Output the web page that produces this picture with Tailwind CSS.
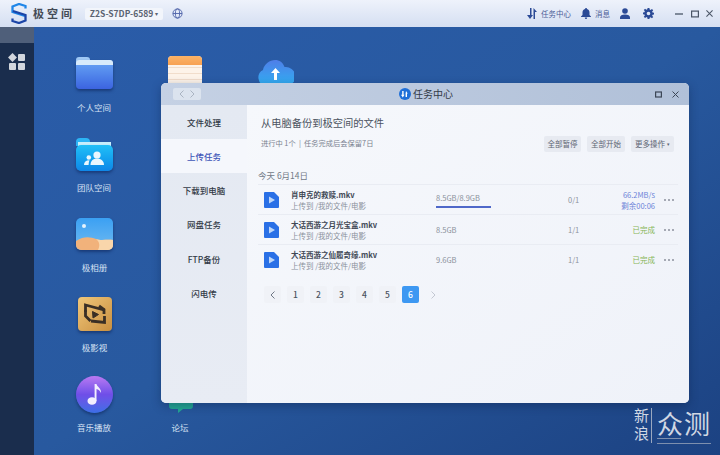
<!DOCTYPE html>
<html lang="zh-CN">
<head>
<meta charset="UTF-8">
<title>极空间 任务中心</title>
<script src="https://cdn.jsdelivr.net/npm/@tailwindcss/browser@4"></script>
</head>
<body class="w-[720px] h-[455px] overflow-hidden font-['Noto_Sans_CJK_SC','Liberation_Sans',sans-serif]">
<div class="relative w-[720px] h-[455px] flex flex-col overflow-hidden">
  <!-- Top bar -->
  <header class="h-[27px] shrink-0 flex items-center bg-gradient-to-b from-[#eef2fb] to-[#d5dff2] text-[#3c4c86]">
    <svg class="ml-[11px] w-[16px] h-[21px]" viewBox="0 0 16 21" fill="none" stroke-width="2.300"><path d="M14.500 5.500V3L8 1 1.500 3.500V9L14 13" stroke="#1f86e8"/><path d="M1.500 15.500V18L8 20l6.500-2.500V12L2 8" stroke="#1c45a8"/></svg>
    <span class="ml-[6px] w-[42px] text-[11px] leading-none font-bold tracking-[3px] text-[#434a56]">极空间</span>
    <div class="ml-[10px] w-[78px] h-[12px] rounded-[2px] bg-[#f2f5fb] flex items-center justify-center text-[8.500px] font-bold text-[#5b6472] whitespace-nowrap">Z2S-S7DP-6589<span class="ml-[2px] text-[6px] font-normal">▾</span></div>
    <svg class="ml-[9px] w-[11px] h-[11px]" viewBox="0 0 12 12" fill="none" stroke="#4e63a8" stroke-width="1"><circle cx="6" cy="6" r="5"/><ellipse cx="6" cy="6" rx="2.300" ry="5"/><path d="M1 6h10"/></svg>
    <div class="ml-auto flex items-center">
      <svg class="w-[10px] h-[11px]" viewBox="0 0 10 11" fill="#2b4a96"><path d="M3 0h1.500v7H6L3 11 0 7h3zM6.500 0 10 4H8v7H6.500z"/></svg>
      <span class="ml-[4px] text-[7.500px] leading-none text-[#4a5c96]">任务中心</span>
      <svg class="ml-[10px] w-[10px] h-[11px]" viewBox="0 0 10 11" fill="#2b4a96"><path d="M5 0c.6 0 1 .4 1 .9C7.600 1.300 8.500 2.600 8.500 4.500V7L10 8.500V9H0v-.5L1.500 7V4.500C1.500 2.600 2.400 1.300 4 .9 4 .4 4.400 0 5 0zM3.800 9.500h2.400C6.200 10.300 5.700 11 5 11s-1.200-.7-1.200-1.500z"/></svg>
      <span class="ml-[4px] text-[7.500px] leading-none text-[#4a5c96]">消息</span>
      <svg class="ml-[10px] w-[10px] h-[11px]" viewBox="0 0 10 11" fill="#2b4a96"><circle cx="5" cy="3" r="2.800"/><path d="M0 11V9.500C0 7.500 2 6.500 5 6.500s5 1 5 3V11z"/></svg>
      <svg class="ml-[13px] w-[11px] h-[11px]" viewBox="0 0 24 24" fill="#2b4a96"><path fill-rule="evenodd" d="M10 0h4l.6 3.500 2 .8L19.500 2l2.800 2.800-2.300 2.900.8 2 3.200.6v4l-3.200.6-.8 2 2.300 2.900-2.800 2.800-2.900-2.300-2 .8L14 24h-4l-.6-3.500-2-.8L4.500 22l-2.800-2.800L4 16.300l-.8-2L0 13.700v-4l3.200-.6.8-2-2.300-2.900L4.500 1.400l2.900 2.300 2-.8zM12 8a4 4 0 1 0 0 8 4 4 0 0 0 0-8z"/></svg>
      <svg class="ml-[21px] w-[8px] h-[8px]" viewBox="0 0 8 8" stroke="#4a5566" stroke-width="1.300"><path d="M0 4h8"/></svg>
      <svg class="ml-[8px] w-[8px] h-[8px]" viewBox="0 0 8 8" fill="none" stroke="#4a5566" stroke-width="1.200"><rect x=".6" y="1.100" width="6.800" height="5.800"/></svg>
      <svg class="ml-[7px] mr-[7px] w-[7px] h-[7px]" viewBox="0 0 8 8" stroke="#4a5566" stroke-width="1.200"><path d="m.5.500 7 7m0-7-7 7"/></svg>
    </div>
  </header>

  <div class="flex-1 flex">
    <!-- Left dock -->
    <aside class="w-[34px] shrink-0 bg-[#1a2d4d] flex flex-col items-center">
      <div class="w-full h-[16px] bg-[#4f5f7a]"></div>
      <div class="mt-[11px] grid grid-cols-2 gap-[1.500px]">
        <div class="w-[7px] h-[7px] rotate-45 scale-90 bg-[#d2d6dd]"></div>
        <div class="w-[7px] h-[7px] rounded-[1px] bg-[#d2d6dd]"></div>
        <div class="w-[7px] h-[7px] rounded-[1px] bg-[#d2d6dd]"></div>
        <div class="w-[7px] h-[7px] rounded-[1px] bg-[#d2d6dd]"></div>
      </div>
    </aside>
    <!-- Desktop -->
    <main class="flex-1 bg-gradient-to-br from-[#2a5ca9] via-[#28599f] to-[#1c4282]"></main>
  </div>

  <!-- Desktop icons -->
  <div class="absolute left-[76px] top-[57px] w-[37px] h-[32px]">
    <div class="absolute left-0 top-0 w-[14px] h-[6px] rounded-t-[3px] bg-[#9fc8f5]"></div>
    <div class="absolute left-0 top-[3px] w-full h-[29px] rounded-[4px] bg-gradient-to-b from-[#6aa6f5] to-[#3c63e0] shadow-[0_2px_3px_rgba(10,30,80,.5)]"></div>
    <div class="absolute left-0 top-[3px] w-full h-[5px] rounded-t-[3px] bg-[#d8ebfb]"></div>
  </div>
  <span class="absolute left-[74px] top-[101px] w-[40px] text-center text-[8.500px] leading-[12px] text-[#d7e2f4]">个人空间</span>

  <div class="absolute left-[76px] top-[138px] w-[37px] h-[33px]">
    <div class="absolute left-0 top-0 w-[14px] h-[8px] rounded-t-[4px] bg-[#2cb4f5]"></div>
    <div class="absolute left-[2px] top-[4px] w-[33px] h-[6px] bg-[#c7eefc]"></div>
    <div class="absolute left-0 top-[7px] w-full h-[26px] rounded-[5px] bg-gradient-to-b from-[#22c0f7] to-[#0f87e8] shadow-[0_2px_3px_rgba(10,30,80,.5)] flex items-center justify-center">
      <svg class="w-[21px] h-[14px]" viewBox="0 0 21 14" fill="#eaf7fe"><circle cx="13" cy="4" r="3.600"/><path d="M6.500 14c0-4 2.500-6.500 6.500-6.500s7 2.500 7 6.500z"/><circle cx="4.800" cy="6.500" r="2.300"/><path d="M0 14c0-3 1.800-4.800 5.500-4.800-.6 1.400-.9 3-.9 4.800z"/></svg>
    </div>
  </div>
  <span class="absolute left-[74px] top-[181px] w-[40px] text-center text-[8.500px] leading-[12px] text-[#d7e2f4]">团队空间</span>

  <div class="absolute left-[76px] top-[218px] w-[37px] h-[32px] rounded-[5px] overflow-hidden bg-gradient-to-b from-[#3aa0f3] to-[#6dbaf0] shadow-[0_2px_3px_rgba(10,30,80,.5)]">
    <div class="absolute left-[6px] top-[6px] w-[4px] h-[4px] rounded-full bg-[#e4f3fd]"></div>
    <svg class="absolute left-0 bottom-0 w-[37px] h-[16px]" viewBox="0 0 37 16" preserveAspectRatio="none"><path d="M0 7C8 2 14 3 20 5c6 2 11 0 17 1v10H0z" fill="#f1b27b"/><path d="M20 5c5 2 11 0 17 1v10H22c2-4 2-8-2-11z" fill="#f9d6ab"/></svg>
  </div>
  <span class="absolute left-[76px] top-[261px] w-[37px] text-center text-[8.500px] leading-[12px] text-[#d7e2f4]">极相册</span>

  <div class="absolute left-[78px] top-[297px] w-[34px] h-[34px] rounded-[4px] bg-gradient-to-br from-[#f0c77a] to-[#c98f3f] shadow-[0_2px_3px_rgba(10,30,80,.5)] flex items-center justify-center">
    <svg class="w-[24px] h-[25px]" viewBox="0 0 24 25" fill="none" stroke="#3a2f25" stroke-width="2.800"><path d="M2.500 10V3L21 8v4"/><path d="M2.500 8 2.500 14l5 5"/><path d="M21.500 14v6.500L8 19"/><path d="M21.500 8 16 4"/><path d="m9.500 9.500 6 3-5.500 3.500z" fill="#3a2f25" stroke-width="1"/></svg>
  </div>
  <span class="absolute left-[76px] top-[341px] w-[37px] text-center text-[8.500px] leading-[12px] text-[#d7e2f4]">极影视</span>

  <div class="absolute left-[76px] top-[376px] w-[37px] h-[37px] rounded-full bg-gradient-to-b from-[#bb79f2] via-[#6f4ee8] to-[#3a6ee6] shadow-[0_2px_3px_rgba(10,30,80,.5)] flex items-center justify-center">
    <svg class="w-[16px] h-[21px]" viewBox="0 0 16 21" fill="#f3effe"><ellipse cx="5" cy="17" rx="4.500" ry="3.800"/><path d="M7.600 0H9.500c.4 3 5 4 4.500 9-1-2.500-2.500-3.500-4.500-4V17H7.600z"/></svg>
  </div>
  <span class="absolute left-[74px] top-[421px] w-[40px] text-center text-[8.500px] leading-[12px] text-[#d7e2f4]">音乐播放</span>

  <div class="absolute left-[168px] top-[56px] w-[34px] h-[34px] rounded-t-[4px] overflow-hidden bg-[repeating-linear-gradient(180deg,#fdf3e9_0,#fdf3e9_5px,#f1ddcb_5px,#f1ddcb_6px)]">
    <div class="h-[9px] bg-gradient-to-b from-[#fbb367] to-[#f7a152]"></div>
  </div>
  <svg class="absolute left-[257px] top-[60px] w-[37px] h-[26px]" viewBox="0 0 37 26"><defs><linearGradient id="cloud" x1="0" y1="0" x2="0" y2="1"><stop offset="0" stop-color="#4f7ee8"/><stop offset="1" stop-color="#2fb0f2"/></linearGradient></defs><path d="M9 26A8.500 8.500 0 0 1 6 10C7 4 13 0 18 0c4.500 0 8 2.500 9.500 7A9.500 9.500 0 0 1 30 26z" fill="url(#cloud)"/><path d="M18.500 8 23 13h-3v7h-3v-7h-3z" fill="#fff"/></svg>

  <svg class="absolute left-[169px] top-[400px] w-[24px] h-[13px]" viewBox="0 0 24 13"><path d="M0 0h24v6a3 3 0 0 1-3 3H14l-5 4V9H3a3 3 0 0 1-3-3z" fill="#23a894"/></svg>
  <span class="absolute left-[168px] top-[421px] w-[24px] text-center text-[8.500px] leading-[12px] text-[#d7e2f4]">论坛</span>

  <!-- Task center window -->
  <section class="absolute left-[161px] top-[83px] w-[528px] h-[320px] rounded-[5px] overflow-hidden flex flex-col shadow-[0_3px_10px_rgba(10,25,60,.35)] bg-[#f3f5fb]">
    <div class="relative h-[22px] shrink-0 bg-gradient-to-r from-[#c5d1e4] to-[#b0c0d8] flex items-center">
      <div class="ml-[12px] w-[28px] h-[12px] rounded-[2px] bg-[#dbe3ee] flex items-center justify-around px-[3px] text-[#aab4c2]">
        <svg class="w-[5px] h-[8px]" viewBox="0 0 5 8" fill="none" stroke="currentColor"><path d="M4.500.500 1 4l3.500 3.500"/></svg>
        <svg class="w-[5px] h-[8px]" viewBox="0 0 5 8" fill="none" stroke="currentColor"><path d="M.5.500 4 4 .5 7.500"/></svg>
      </div>
      <div class="absolute left-[238px] top-0 h-full flex items-center">
        <svg class="w-[12px] h-[12px]" viewBox="0 0 12 12"><circle cx="6" cy="6" r="6" fill="#1f6fd8"/><path d="M3.200 3v3.800H2L3.800 9.500 5.500 6.800H4.600V3zM7 3l1.800 2.500H8V9H6.600V5.500" fill="#fff"/></svg>
        <span class="ml-[2px] text-[10px] leading-none text-[#333b47]">任务中心</span>
      </div>
      <div class="ml-auto mr-[10px] flex items-center gap-[10px]">
        <svg class="w-[7px] h-[7px]" viewBox="0 0 7 7" fill="none" stroke="#3c4756" stroke-width="1.200"><rect x=".6" y="1" width="5.800" height="5"/></svg>
        <svg class="w-[7px] h-[7px]" viewBox="0 0 7 7" stroke="#3c4756" stroke-width="1"><path d="m.5.500 6 6m0-6-6 6"/></svg>
      </div>
    </div>

    <div class="flex-1 flex min-h-0">
      <!-- Sidebar -->
      <nav class="w-[86px] shrink-0 bg-gradient-to-b from-[#e4e9f2] to-[#e8ecf4] flex flex-col text-[8.500px] font-medium text-[#333b47]">
        <div class="h-[34px] flex items-center justify-center">文件处理</div>
        <div class="h-[34px] flex items-center justify-center bg-[#f5f7fc] text-[#3e55b8]">上传任务</div>
        <div class="h-[34px] flex items-center justify-center">下载到电脑</div>
        <div class="h-[35px] flex items-center justify-center">网盘任务</div>
        <div class="h-[34px] flex items-center justify-center">FTP备份</div>
        <div class="h-[35px] flex items-center justify-center">闪电传</div>
      </nav>

      <!-- Content -->
      <div class="flex-1 pl-[11px] pr-[11px] min-w-0 bg-gradient-to-br from-[#f6f8fc] to-[#eff2f9]">
        <div class="flex justify-between">
          <div class="pl-[3px]">
            <h1 class="mt-[10px] text-[10.250px] leading-[16px] font-normal text-[#4b5360]">从电脑备份到极空间的文件</h1>
            <p class="mt-[6px] text-[7.250px] leading-[12px] text-[#7b8290] whitespace-pre">进行中 1个  |  任务完成后会保留7日</p>
          </div>
          <div class="mt-[31px] mr-[4px] flex gap-[6px] text-[7.500px] text-[#5d6573]">
            <div class="w-[37px] h-[16px] rounded-[2px] bg-[#e7eaf1] flex items-center justify-center">全部暂停</div>
            <div class="w-[38px] h-[16px] rounded-[2px] bg-[#e7eaf1] flex items-center justify-center">全部开始</div>
            <div class="w-[43px] h-[16px] rounded-[2px] bg-[#e7eaf1] flex items-center justify-center">更多操作<span class="ml-[2px] text-[5px]">▾</span></div>
          </div>
        </div>
        <div class="mt-[17px] text-[8.500px] leading-[12px] text-[#727a87]">今天 6月14日</div>

        <div class="mt-[3px] border-t border-[#e9ecf3] text-[7.500px] text-[#8b919c]">
          <div class="h-[30px] flex items-center border-b border-[#e9ecf3]">
            <svg class="ml-[6px] w-[15px] h-[16px] shrink-0" viewBox="0 0 15 16"><path d="M1 0h9l5 5v10a1 1 0 0 1-1 1H1a1 1 0 0 1-1-1V1a1 1 0 0 1 1-1z" fill="#2a70e6"/><path d="M5 4.500 11 8l-6 3.500z" fill="#bcd6fa"/></svg>
            <div class="ml-[12px] w-[145px] shrink-0">
              <div class="text-[7.500px] leading-[11px] font-bold text-[#424956]">肖申克的救赎.mkv</div>
              <div class="leading-[11px]">上传到 /我的文件/电影</div>
            </div>
            <div class="w-[55px] shrink-0">
              <div class="leading-[12px]">8.5GB/8.9GB</div>
              <div class="mt-[2px] h-[2px] bg-[#4f68c9]"></div>
            </div>
            <div class="ml-[77px] w-[10px] shrink-0">0/1</div>
            <div class="ml-[10px] w-[67px] shrink-0 text-right text-[#6b83d8] leading-[11px]"><div>66.2MB/s</div><div>剩余00:06</div></div>
            <svg class="ml-[9px] w-[10px] h-[2px] shrink-0" viewBox="0 0 10 2" fill="#8b919c"><circle cx="1" cy="1" r="1"/><circle cx="5" cy="1" r="1"/><circle cx="9" cy="1" r="1"/></svg>
          </div>
          <div class="h-[30px] flex items-center border-b border-[#e9ecf3]">
            <svg class="ml-[6px] w-[15px] h-[16px] shrink-0" viewBox="0 0 15 16"><path d="M1 0h9l5 5v10a1 1 0 0 1-1 1H1a1 1 0 0 1-1-1V1a1 1 0 0 1 1-1z" fill="#2a70e6"/><path d="M5 4.500 11 8l-6 3.500z" fill="#bcd6fa"/></svg>
            <div class="ml-[12px] w-[145px] shrink-0">
              <div class="text-[7.500px] leading-[11px] font-bold text-[#424956]">大话西游之月光宝盒.mkv</div>
              <div class="leading-[11px]">上传到 /我的文件/电影</div>
            </div>
            <div class="w-[55px] shrink-0">8.5GB</div>
            <div class="ml-[77px] w-[10px] shrink-0">1/1</div>
            <div class="ml-[10px] w-[67px] shrink-0 text-right text-[#86b455]">已完成</div>
            <svg class="ml-[9px] w-[10px] h-[2px] shrink-0" viewBox="0 0 10 2" fill="#8b919c"><circle cx="1" cy="1" r="1"/><circle cx="5" cy="1" r="1"/><circle cx="9" cy="1" r="1"/></svg>
          </div>
          <div class="h-[30px] flex items-center">
            <svg class="ml-[6px] w-[15px] h-[16px] shrink-0" viewBox="0 0 15 16"><path d="M1 0h9l5 5v10a1 1 0 0 1-1 1H1a1 1 0 0 1-1-1V1a1 1 0 0 1 1-1z" fill="#2a70e6"/><path d="M5 4.500 11 8l-6 3.500z" fill="#bcd6fa"/></svg>
            <div class="ml-[12px] w-[145px] shrink-0">
              <div class="text-[7.500px] leading-[11px] font-bold text-[#424956]">大话西游之仙履奇缘.mkv</div>
              <div class="leading-[11px]">上传到 /我的文件/电影</div>
            </div>
            <div class="w-[55px] shrink-0">9.6GB</div>
            <div class="ml-[77px] w-[10px] shrink-0">1/1</div>
            <div class="ml-[10px] w-[67px] shrink-0 text-right text-[#86b455]">已完成</div>
            <svg class="ml-[9px] w-[10px] h-[2px] shrink-0" viewBox="0 0 10 2" fill="#8b919c"><circle cx="1" cy="1" r="1"/><circle cx="5" cy="1" r="1"/><circle cx="9" cy="1" r="1"/></svg>
          </div>
        </div>

        <div class="mt-[11px] ml-[6px] flex gap-[6px] text-[8.500px] font-medium text-[#4b5360]">
          <div class="w-[17px] h-[17px] rounded-[2px] bg-[#f0f2f7] flex items-center justify-center"><svg class="w-[5px] h-[8px]" viewBox="0 0 5 8" fill="none" stroke="#707886"><path d="M4.500.500 1 4l3.500 3.500"/></svg></div>
          <div class="w-[17px] h-[17px] rounded-[2px] bg-[#f0f2f7] flex items-center justify-center">1</div>
          <div class="w-[17px] h-[17px] rounded-[2px] bg-[#f0f2f7] flex items-center justify-center">2</div>
          <div class="w-[17px] h-[17px] rounded-[2px] bg-[#f0f2f7] flex items-center justify-center">3</div>
          <div class="w-[17px] h-[17px] rounded-[2px] bg-[#f0f2f7] flex items-center justify-center">4</div>
          <div class="w-[17px] h-[17px] rounded-[2px] bg-[#f0f2f7] flex items-center justify-center">5</div>
          <div class="w-[17px] h-[17px] rounded-[2px] bg-[#3d98f2] flex items-center justify-center text-white">6</div>
          <div class="w-[17px] h-[17px] rounded-[2px] flex items-center justify-center"><svg class="w-[5px] h-[8px]" viewBox="0 0 5 8" fill="none" stroke="#c3c8d2"><path d="M.5.500 4 4 .5 7.500"/></svg></div>
        </div>
      </div>
    </div>
  </section>

  <!-- Watermark -->
  <div class="absolute left-[633px] top-[408px] flex text-[#d0d7e3]">
    <div class="w-[16px] h-[36px] [writing-mode:vertical-rl] text-[15px] leading-[16px] tracking-[3px]">新浪</div>
    <div class="ml-[2px] h-[35px] w-px bg-[#9aa8c0]"></div>
    <div class="ml-[5px] relative">
      <div class="text-[26px] leading-[30px] whitespace-nowrap tracking-[1px]">众测</div>
      <div class="absolute left-0 top-[30px] w-[24px] h-[1px] bg-[#7d8fae]"></div>
      <div class="absolute left-0 top-[35px] w-[54px] h-[1px] bg-[#7d8fae]"></div>
    </div>
  </div>
</div>
</body>
</html>
